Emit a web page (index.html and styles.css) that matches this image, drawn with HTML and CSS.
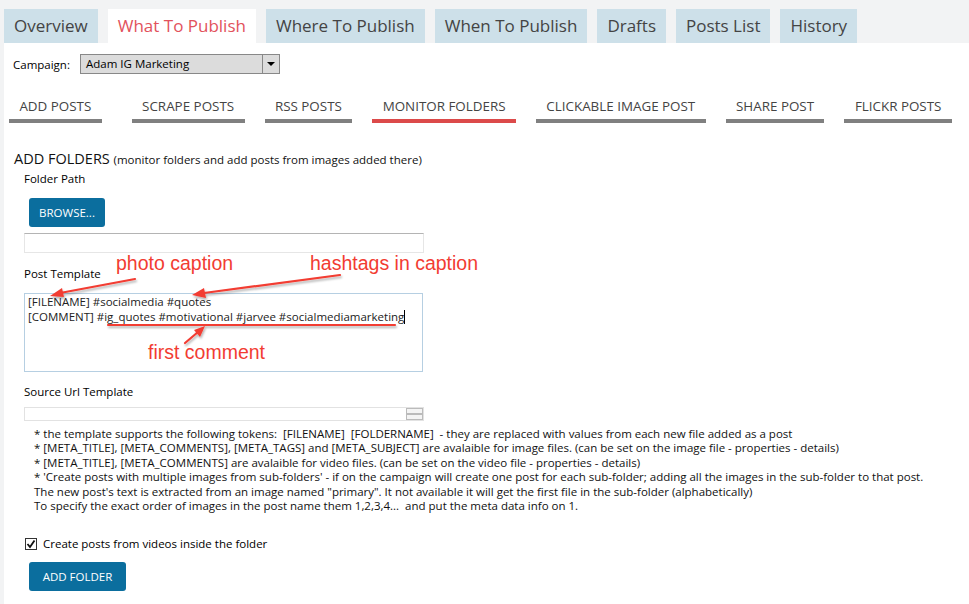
FILE: index.html
```html
<!DOCTYPE html>
<html lang="en">
  <head>
    <meta charset="UTF-8" />
    <title>What To Publish</title>
    <link rel="stylesheet" href="styles.css">
  </head>
  <body>
    <div class="tabs">
      <a class="tab">Overview</a>
      <a class="tab active">What To Publish</a>
      <a class="tab">Where To Publish</a>
      <a class="tab">When To Publish</a>
      <a class="tab">Drafts</a>
      <a class="tab">Posts List</a>
      <a class="tab">History</a>
    </div>

    <div class="panel">
      <div class="campaign">
        <span class="label">Campaign:</span>
        <div class="select">
          <span class="select-value">Adam IG Marketing</span>
          <span class="select-arrow"></span>
        </div>
      </div>

      <div class="subtabs">
        <a class="subtab">Add Posts</a>
        <a class="subtab">Scrape Posts</a>
        <a class="subtab">RSS Posts</a>
        <a class="subtab active">Monitor Folders</a>
        <a class="subtab">Clickable Image Post</a>
        <a class="subtab">Share Post</a>
        <a class="subtab">Flickr Posts</a>
      </div>

      <h2 class="section-title">Add Folders <small>(monitor folders and add posts from images added there)</small></h2>

      <div class="form">
        <div class="field-label">Folder Path</div>
        <button class="btn browse">BROWSE...</button>
        <div class="input"></div>

        <div class="field-label template-label">Post Template</div>
        <div class="textarea">[FILENAME] #socialmedia #quotes<br>[COMMENT] #ig_quotes #motivational #jarvee #socialmediamarketing<span class="caret"></span></div>

        <div class="field-label source-label">Source Url Template</div>
        <div class="input small">
          <span class="spin"><span></span><span></span></span>
        </div>

        <div class="notes">
          <p>* the template supports the following tokens:&nbsp; [FILENAME]&nbsp; [FOLDERNAME]&nbsp; - they are replaced with values from each new file added as a post</p>
          <p>* [META_TITLE], [META_COMMENTS], [META_TAGS] and [META_SUBJECT] are avalaible for image files. (can be set on the image file - properties - details)</p>
          <p>* [META_TITLE], [META_COMMENTS] are avalaible for video files. (can be set on the video file - properties - details)</p>
          <p>* 'Create posts with multiple images from sub-folders' - if on the campaign will create one post for each sub-folder; adding all the images in the sub-folder to that post.</p>
          <p>The new post's text is extracted from an image named "primary". It not available it will get the first file in the sub-folder (alphabetically)</p>
          <p>To specify the exact order of images in the post name them 1,2,3,4...&nbsp; and put the meta data info on 1.</p>
        </div>

        <label class="check">
          <span class="box"><svg width="10" height="10" viewBox="0 0 10 10"><path d="M1.5 5 L4 8 L8.5 1.5" fill="none" stroke="#111" stroke-width="1.8"/></svg></span>
          Create posts from videos inside the folder
        </label>

        <button class="btn add">ADD FOLDER</button>
      </div>
    </div>

    <!-- red annotations drawn over the screenshot -->
    <svg class="notes-overlay" width="969" height="604" viewBox="0 0 969 604">
      <defs>
        <filter id="shadow" x="-10%" y="-50%" width="120%" height="200%">
          <feDropShadow dx="1" dy="2" stdDeviation="1" flood-color="#000" flood-opacity="0.3"/>
        </filter>
      </defs>
      <g fill="#f23c32" font-family="Liberation Sans, Arial, sans-serif" font-size="19.5">
        <text x="116" y="270">photo caption</text>
        <text x="310" y="270">hashtags in caption</text>
        <text x="148" y="359">first comment</text>
      </g>
      <g stroke="#f23c32" stroke-width="2.2" fill="#f23c32" filter="url(#shadow)" stroke-linecap="round">
        <line x1="135" y1="279" x2="60" y2="293"/>
        <polygon points="50,296 62,288 64,297" stroke="none"/>
        <line x1="340" y1="275" x2="204" y2="293"/>
        <polygon points="192,295 204,288 206,298" stroke="none"/>
        <line x1="108" y1="325" x2="395" y2="325"/>
        <line x1="185" y1="343" x2="198" y2="332"/>
        <polygon points="205,326 194,330 200,337" stroke="none"/>
      </g>
    </svg>
  </body>
</html>
```

FILE: styles.css
```css
body {
  margin: 0;
  background-color: #f2f3f4;
  font-family: "Open Sans", "Noto Sans", sans-serif;
  color: #000;
  position: relative;
  width: 969px;
  height: 604px;
  overflow: hidden;
}

.tabs {
  display: flex;
  gap: 10px;
  padding: 9px 0 0 4px;
  height: 34px;
}

.tab {
  display: block;
  height: 34px;
  line-height: 33px;
  padding: 0 10px;
  background-color: #cde0e9;
  color: #444;
  font-size: 17px;
}

.tab.active {
  background-color: #fff;
  color: #e2525c;
}

.panel {
  background-color: #fff;
  margin-left: 4px;
  height: 561px;
}

.campaign {
  display: flex;
  align-items: center;
  padding: 11px 0 0 9px;
  font-size: 11.5px;
}

.campaign .label {
  width: 67px;
}

.select {
  display: flex;
  width: 198px;
  height: 18px;
  border: 1px solid #888;
  background-color: #dcdcdc;
}

.select-value {
  flex: 1;
  line-height: 18px;
  padding-left: 5px;
}

.select-arrow {
  width: 16px;
  border-left: 1px solid #888;
  position: relative;
}

.select-arrow::after {
  content: "";
  position: absolute;
  left: 4px;
  top: 7px;
  border-left: 4px solid transparent;
  border-right: 4px solid transparent;
  border-top: 4px solid #000;
}

.subtabs {
  display: flex;
  gap: 20px;
  padding-left: 5px;
  margin-top: 23px;
}

.subtab {
  display: block;
  padding: 0 10.4px;
  height: 22px;
  text-align: center;
  border-bottom: 4px solid #808080;
  color: #444;
  font-size: 13.4px;
  text-transform: uppercase;
  white-space: nowrap;
}

.subtab:first-child {
  margin-right: 10px;
}

.subtab.active {
  border-bottom-color: #dc4a4a;
}

.section-title {
  margin: 26px 0 0 10px;
  font-size: 14.5px;
  font-weight: normal;
  text-transform: uppercase;
  color: #111;
}

.section-title small {
  font-size: 11.5px;
  text-transform: none;
}

.form {
  padding-left: 20px;
}

.field-label {
  font-size: 11.5px;
  margin-top: 3px;
  height: 16px;
}

.btn {
  display: block;
  border: none;
  border-radius: 3px;
  background-color: #0b6e9e;
  color: #fff;
  font-family: inherit;
  font-size: 11.5px;
  cursor: pointer;
}

.browse {
  margin: 11px 0 0 5px;
  width: 76px;
  height: 29px;
}

.input {
  margin-top: 6px;
  width: 398px;
  height: 18px;
  border: 1px solid #e6e6e6;
  border-top-color: #b4b4b4;
}

.template-label {
  margin-top: 13px;
}

.textarea {
  margin-top: 11px;
  width: 394px;
  height: 77px;
  padding: 0 0 0 3px;
  border: 1px solid #b6cfe2;
  font-size: 11.5px;
  line-height: 15px;
  color: #222;
}

.caret {
  display: inline-block;
  width: 1px;
  height: 14px;
  background-color: #000;
  vertical-align: -3px;
}

.source-label {
  margin-top: 12px;
}

.input.small {
  margin-top: 7px;
  height: 12px;
  border: 1px solid #e2e2e2;
  position: relative;
}

.spin {
  position: absolute;
  right: 0;
  top: 0;
  display: flex;
  flex-direction: column;
  width: 17px;
  height: 12px;
}

.spin span {
  flex: 1;
  border: 1px solid #bbb;
  background-color: #f4f4f4;
}

.notes {
  margin: 6px 0 0 10px;
  font-size: 11.5px;
  line-height: 14.4px;
  color: #111;
}

.notes p {
  margin: 0;
  white-space: nowrap;
}

.check {
  display: flex;
  align-items: center;
  gap: 6px;
  margin: 23px 0 0 1px;
  font-size: 11.5px;
}

.check .box {
  display: flex;
  align-items: center;
  justify-content: center;
  width: 10px;
  height: 10px;
  border: 1px solid #333;
}

.add {
  margin: 11px 0 0 5px;
  width: 97px;
  height: 29px;
}

.notes-overlay {
  position: absolute;
  left: 0;
  top: 0;
  pointer-events: none;
}
```
